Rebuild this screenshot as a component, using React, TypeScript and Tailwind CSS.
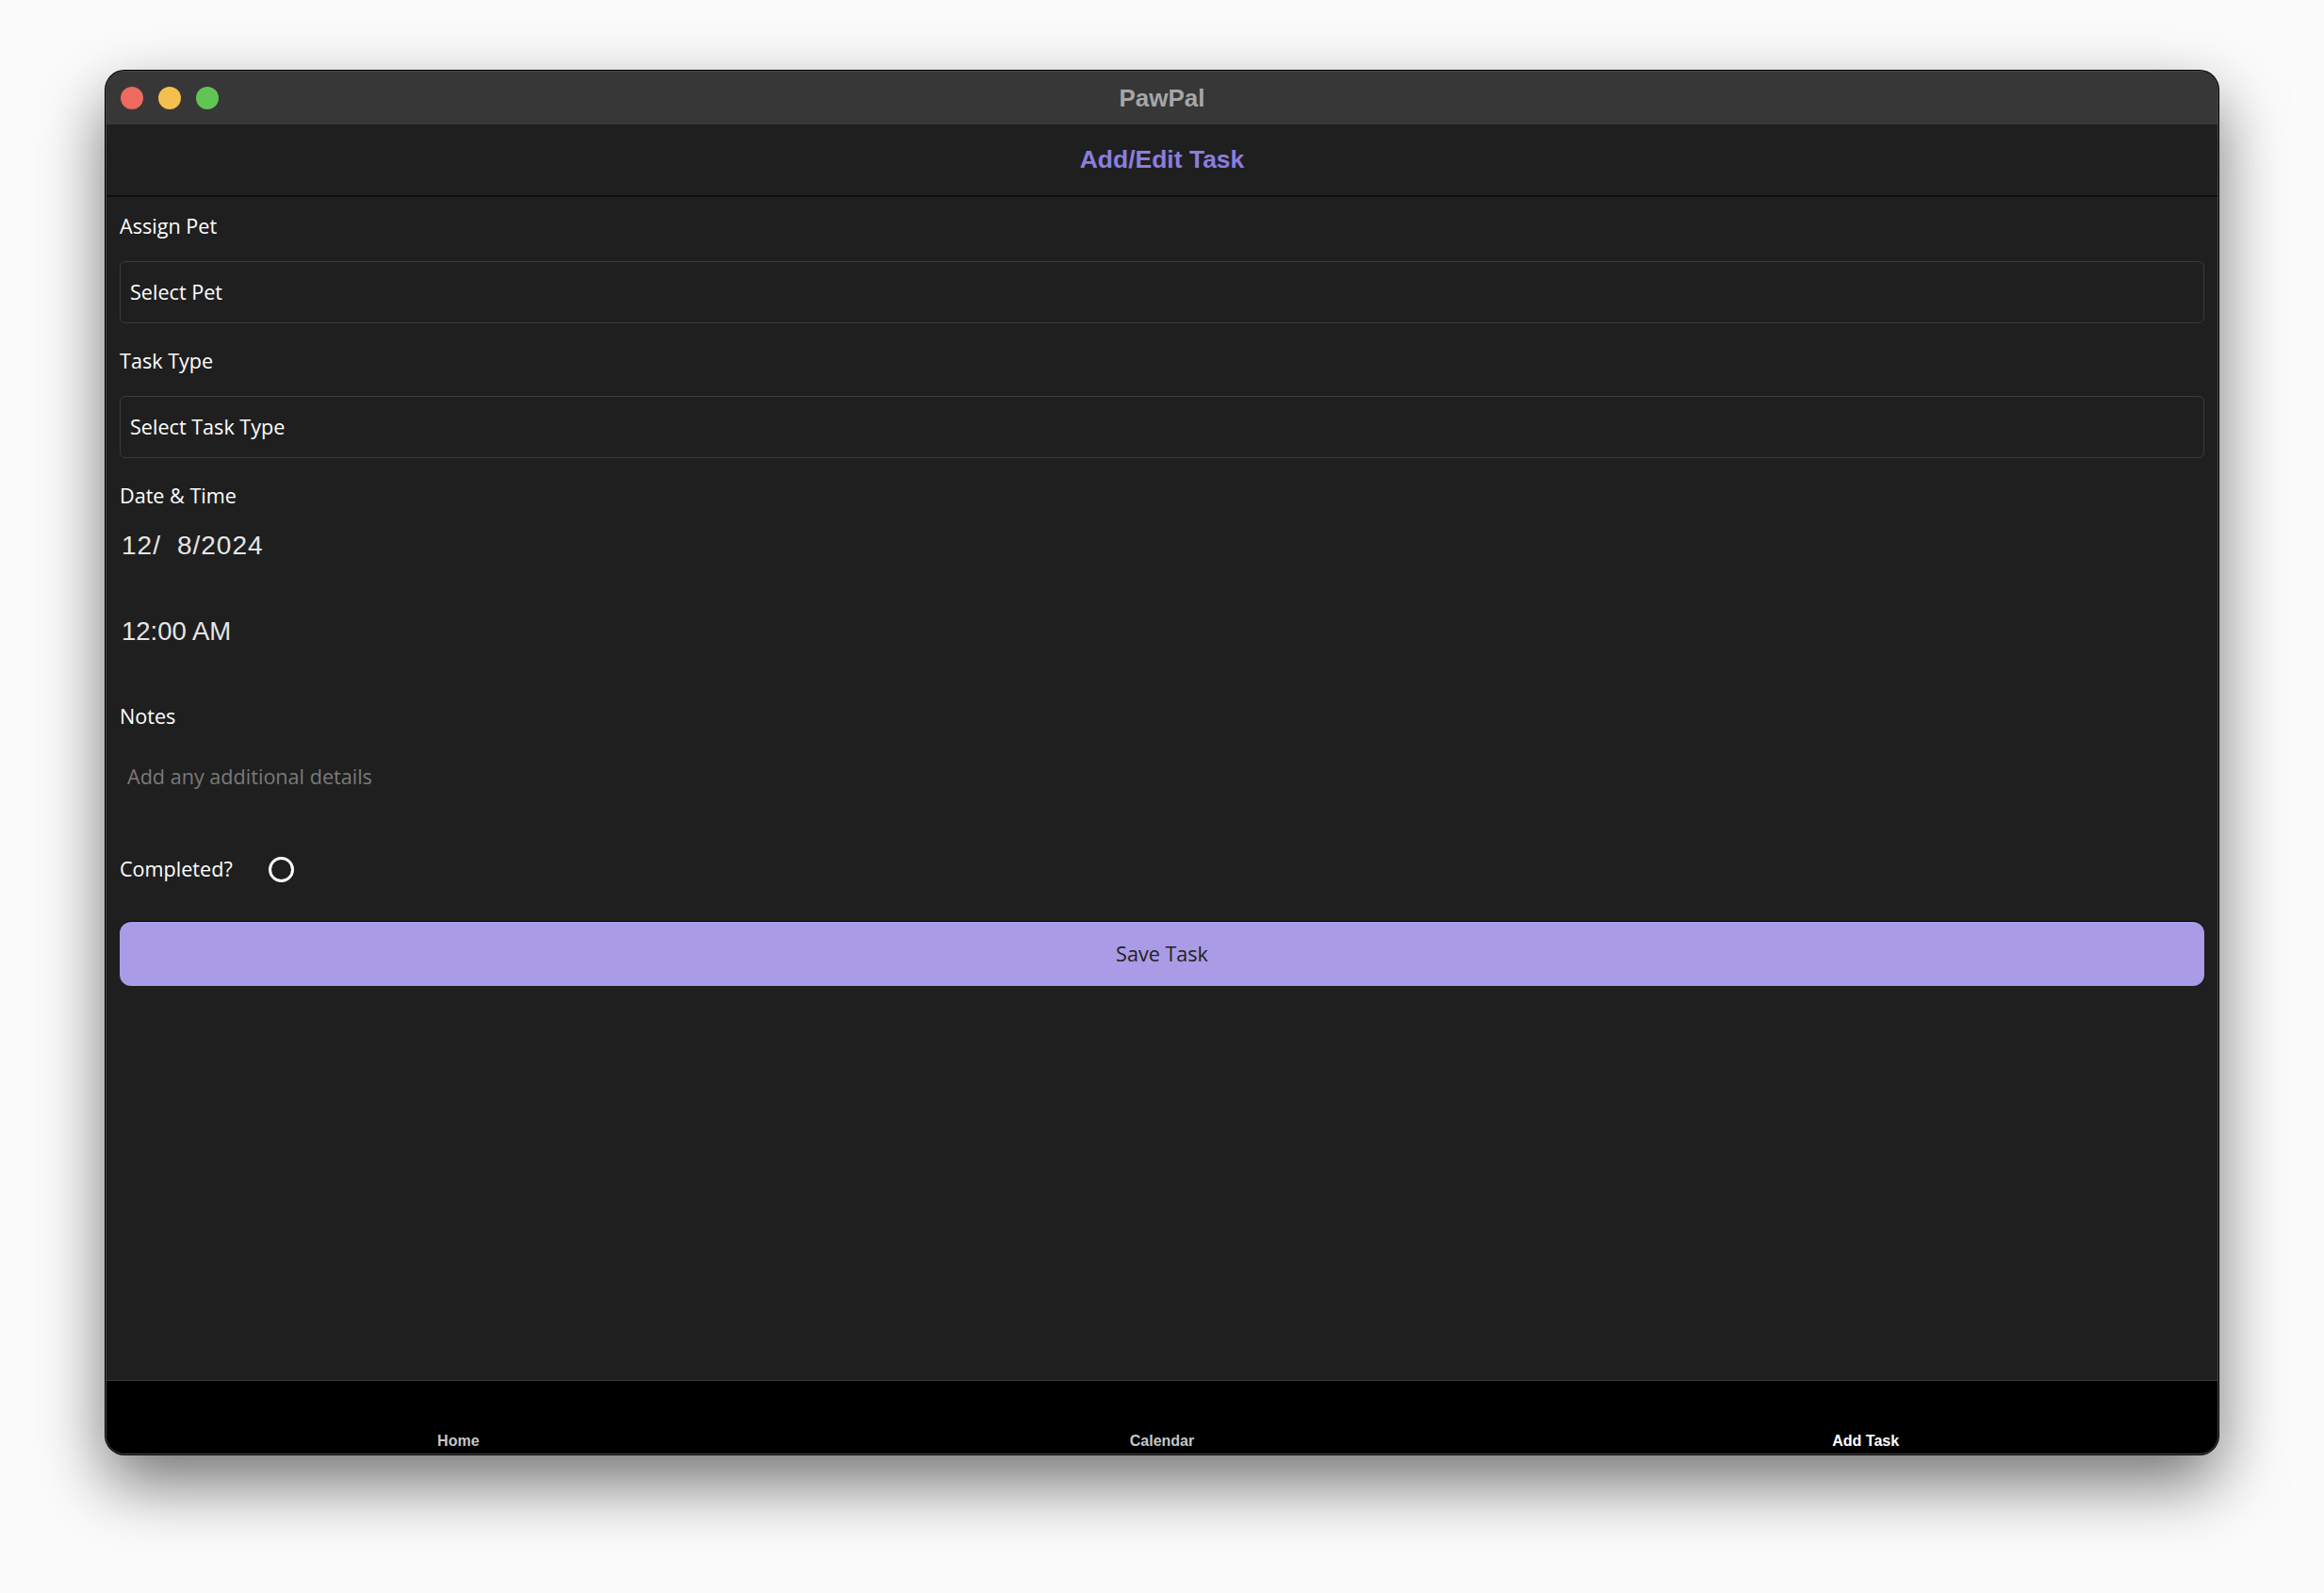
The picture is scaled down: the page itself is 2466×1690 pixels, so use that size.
import React, { useState } from 'react';

const tabs = ['Home', 'Calendar', 'Add Task'];

export default function App() {
  const [completed, setCompleted] = useState(false);

  const label = 'text-[21.6px] leading-[28px] text-white';
  const selectBox =
    'h-[66px] rounded-[6px] border border-[#3b3b3b] px-[10px] flex items-center text-[21.6px] text-white';

  return (
    <div className="min-h-screen bg-[#fbfbfb] pt-[75px] px-[112px] font-['Open_Sans',sans-serif]">
      <div className="h-[1468px] rounded-[20px] border border-[#4a4a4a] ring-1 ring-black overflow-hidden flex flex-col shadow-[0_30px_70px_rgba(0,0,0,0.55)] bg-[#1f1f1f]">
        {/* Title bar */}
        <div className="relative h-[56px] bg-[#373737] flex items-center px-[15px] shrink-0">
          <div className="flex items-center gap-[16px]">
            <span className="w-[24px] h-[24px] rounded-full bg-[#ec6a5e]" />
            <span className="w-[24px] h-[24px] rounded-full bg-[#f4bf4f]" />
            <span className="w-[24px] h-[24px] rounded-full bg-[#61c554]" />
          </div>
          <div className="absolute inset-0 flex items-center justify-center pointer-events-none">
            <span className="font-['Liberation_Sans',sans-serif] font-bold text-[26px] text-[#a6a6a6]">PawPal</span>
          </div>
        </div>

        {/* Header */}
        <div className="h-[77px] border-b-2 border-[#0d0d0d] bg-[#1f1f1f] flex items-center justify-center shrink-0">
          <h1 className="font-['Liberation_Sans',sans-serif] font-bold text-[26.5px] text-[#8b7ddf]">Add/Edit Task</h1>
        </div>

        {/* Form */}
        <div className="flex-1 px-[14px] pt-[17px] flex flex-col">
          <div className={`${label} mb-[23px]`}>Assign Pet</div>
          <div className={`${selectBox} mb-[26px]`}>Select Pet</div>

          <div className={`${label} mb-[23px]`}>Task Type</div>
          <div className={`${selectBox} mb-[26px]`}>Select Task Type</div>

          <div className={label}>Date &amp; Time</div>
          <div className="mt-[21px] h-[36px] leading-[36px] pl-[2px] text-[28px] tracking-[1px] text-[#e6e6e6] font-['Liberation_Sans',sans-serif] flex">
            <span>12/</span>
            <span className="ml-[17px]">8/2024</span>
          </div>
          <div className="mt-[55px] h-[36px] leading-[36px] pl-[2px] text-[27.5px] text-[#e6e6e6] font-['Liberation_Sans',sans-serif]">
            12:00 AM
          </div>

          <div className={`${label} mt-[58px]`}>Notes</div>
          <div className="mt-[36px] pl-[8px] text-[21.6px] leading-[28px] text-[#7a7a7a]">Add any additional details</div>

          <div className="mt-[70px] h-[28px] flex items-center gap-[38px]">
            <span className={label}>Completed?</span>
            <button
              onClick={() => setCompleted(!completed)}
              className="w-[27px] h-[27px] rounded-full border-[3px] border-white flex items-center justify-center"
            >
              {completed && <span className="w-[13px] h-[13px] rounded-full bg-white" />}
            </button>
          </div>

          <button className="mt-[42px] h-[68px] w-full rounded-[12px] bg-[#a99be5] text-[21.6px] text-[#222222] shadow-[0_-1px_1px_rgba(0,0,0,0.8)]">
            Save Task
          </button>
        </div>

        {/* Tab bar */}
        <div className="h-[78px] border-t border-[#3a3a3a] bg-black grid grid-cols-3 shrink-0 font-['Liberation_Sans',sans-serif]">
          {tabs.map((t) => (
            <div key={t} className="flex items-end justify-center pb-[3px]">
              <span className={`text-[16px] leading-[20px] font-bold ${t === 'Add Task' ? 'text-white' : 'text-[#c6c6c6]'}`}>
                {t}
              </span>
            </div>
          ))}
        </div>
      </div>
    </div>
  );
}
